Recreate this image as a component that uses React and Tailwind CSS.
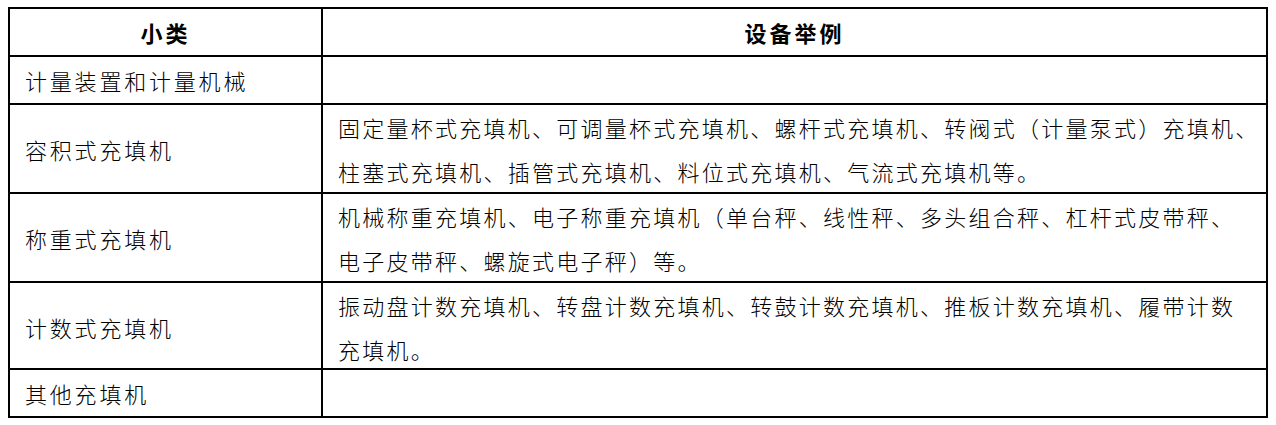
const rows = [
  { name: "计量装置和计量机械", lines: [], h: "h-[48px]" },
  {
    name: "容积式充填机",
    lines: [
      "固定量杯式充填机、可调量杯式充填机、螺杆式充填机、转阀式（计量泵式）充填机、",
      "柱塞式充填机、插管式充填机、料位式充填机、气流式充填机等。",
    ],
    h: "h-[89px]",
  },
  {
    name: "称重式充填机",
    lines: [
      "机械称重充填机、电子称重充填机（单台秤、线性秤、多头组合秤、杠杆式皮带秤、",
      "电子皮带秤、螺旋式电子秤）等。",
    ],
    h: "h-[89px]",
  },
  {
    name: "计数式充填机",
    lines: [
      "振动盘计数充填机、转盘计数充填机、转鼓计数充填机、推板计数充填机、履带计数",
      "充填机。",
    ],
    h: "h-[87px]",
  },
  { name: "其他充填机", lines: [], h: "h-[48px]" },
];

const App = () => {
  return (
    <div
      className="w-[1276px] h-[425px] bg-white pt-[7px] pl-[8px] text-black text-[22px]"
      style={{ fontFamily: '"Noto Sans CJK SC", "Noto Sans", sans-serif' }}
    >
      <div className="w-[1260px] border-2 border-black">
        {/* header */}
        <div className="grid grid-cols-[313px_1fr] h-[46px] font-bold tracking-[3px]">
          <div className="flex items-center justify-center border-r-2 border-black">小类</div>
          <div className="flex items-center justify-center">设备举例</div>
        </div>
        {rows.map((r) => (
          <div key={r.name} className={`grid grid-cols-[313px_1fr] border-t-2 border-black ${r.h}`}>
            <div className="flex items-center border-r-2 border-black px-[15px] font-light tracking-[2.8px]">{r.name}</div>
            <div className="flex flex-col justify-center pl-[15px] leading-[44px] font-light tracking-[2.25px]">
              {r.lines.map((l) => (
                <div key={l} className="whitespace-nowrap">{l}</div>
              ))}
            </div>
          </div>
        ))}
      </div>
    </div>
  );
};

export default App;
